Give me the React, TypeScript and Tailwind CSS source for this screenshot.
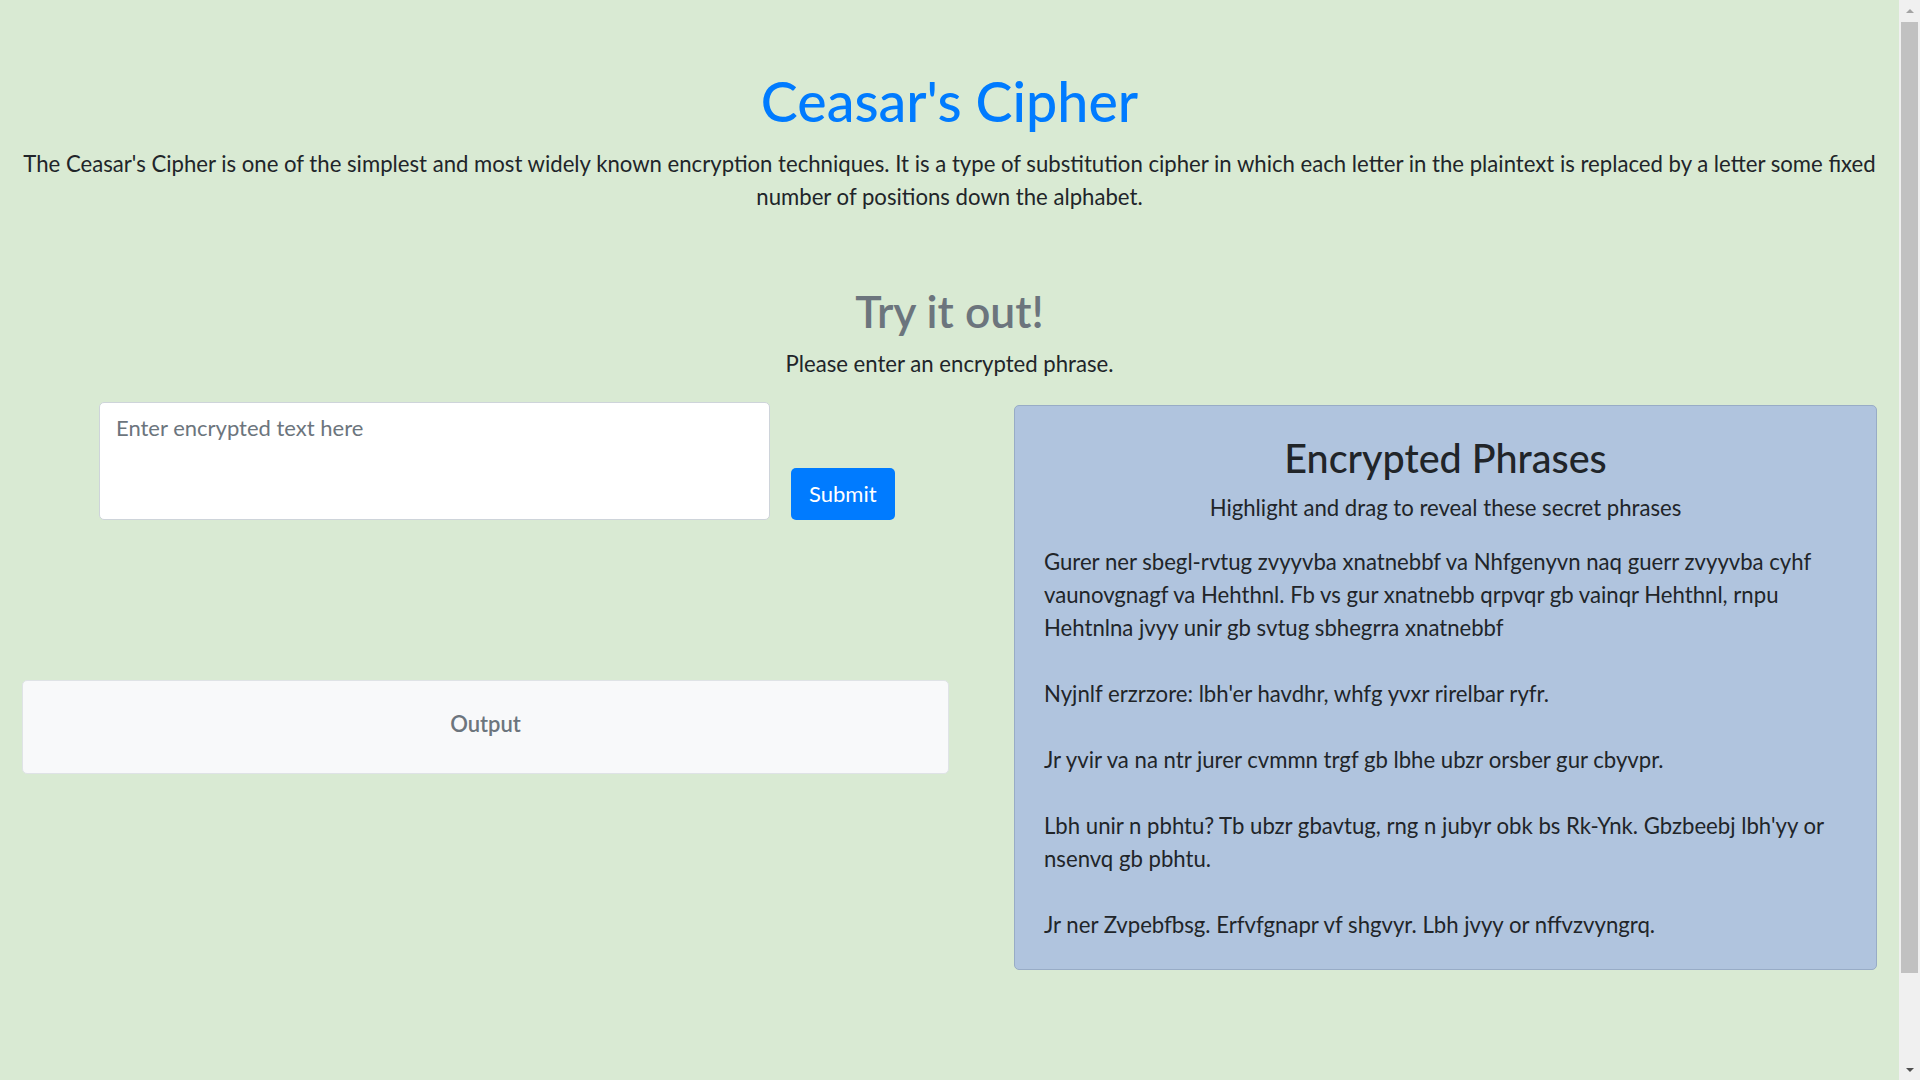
const intro =
  "The Ceasar's Cipher is one of the simplest and most widely known encryption techniques. It is a type of substitution cipher in which each letter in the plaintext is replaced by a letter some fixed number of positions down the alphabet.";

const phrases = [
  "Gurer ner sbegl-rvtug zvyyvba xnatnebbf va Nhfgenyvn naq guerr zvyyvba cyhf vaunovgnagf va Hehthnl. Fb vs gur xnatnebb qrpvqr gb vainqr Hehthnl, rnpu Hehtnlna jvyy unir gb svtug sbhegrra xnatnebbf",
  "Nyjnlf erzrzore: lbh'er havdhr, whfg yvxr rirelbar ryfr.",
  "Jr yvir va na ntr jurer cvmmn trgf gb lbhe ubzr orsber gur cbyvpr.",
  "Lbh unir n pbhtu? Tb ubzr gbavtug, rng n jubyr obk bs Rk-Ynk. Gbzbeebj lbh'yy or nsenvq gb pbhtu.",
  "Jr ner Zvpebfbsg. Erfvfgnapr vf shgvyr. Lbh jvyy or nffvzvyngrq.",
];

// fake browser scrollbar, the page in the reference is a bit taller than the window
function Scrollbar() {
  return (
    <div className="flex h-full w-[21px] shrink-0 flex-col bg-[#f0f0f0]">
      <div className="flex h-[21px] items-center justify-center">
        <span className="h-0 w-0 border-x-[4px] border-b-[4px] border-x-transparent border-b-[#a3a3a3]" />
      </div>
      <div className="mx-[2px] mt-[1px] h-[951px] bg-[#c1c1c1]" />
      <div className="flex-1" />
      <div className="flex h-[21px] items-center justify-center">
        <span className="h-0 w-0 border-x-[4px] border-t-[4px] border-x-transparent border-t-[#505050]" />
      </div>
    </div>
  );
}

export default function App() {
  return (
    <div className="flex h-[1080px] w-full overflow-hidden bg-[#d9ead3] font-['Lato',sans-serif] text-[#212529]">
      <main className="min-w-0 flex-1 px-[22px]">
        <header className="pt-[68px] text-center">
          <h1 className="mb-[12px] text-[55.5px] font-medium leading-[1.2] text-[#007bff]">
            Ceasar's Cipher
          </h1>
          <p className="text-[22.15px] leading-[33px]">{intro}</p>
        </header>

        <section className="mt-[71px] text-center">
          <h2 className="mb-[10px] text-[44.5px] font-semibold leading-[1.2] text-[#6c757d]">
            Try it out!
          </h2>
          <p className="text-[22.15px] leading-[33px]">Please enter an encrypted phrase.</p>
        </section>

        <div className="mt-[22px] flex items-start gap-[65px]">
          <div className="w-[927px] shrink-0">
            <form
              className="ml-[77px] flex items-end gap-[21px]"
              onSubmit={(e) => e.preventDefault()}
            >
              <textarea
                placeholder="Enter encrypted text here"
                className="h-[118px] w-[671px] resize-none rounded-[5px] border border-[#ced4da] bg-white px-[16px] py-[8px] text-[22px] leading-[33px] text-[#495057] placeholder:text-[#6c757d] focus:outline-none"
              />
              <button
                type="submit"
                className="h-[52px] rounded-[5px] bg-[#007bff] px-[18px] text-[22px] leading-[33px] text-white"
              >
                Submit
              </button>
            </form>
            <div className="mt-[160px] flex h-[94px] items-center justify-center rounded-[5px] border border-[#dfe3e6] bg-[#f8f9fa] pb-[6px] text-[22px] font-semibold text-[#6c757d]">
              Output
            </div>
          </div>

          <div className="mt-[3px] w-[863px] shrink-0 rounded-[5px] border border-[#98acc6] bg-[#b0c4de] px-[29px] pb-[28px] pt-[28px]">
            <h2 className="mb-[10px] text-center text-[39.5px] font-medium leading-[1.2]">
              Encrypted Phrases
            </h2>
            <p className="mb-[21px] text-center text-[22.15px] leading-[33px]">
              Highlight and drag to reveal these secret phrases
            </p>
            <p className="text-[22.15px] leading-[33px]">
              {phrases.map((p, i) => (
                <span key={i}>
                  {i > 0 && (
                    <>
                      <br />
                      <br />
                    </>
                  )}
                  {p}
                </span>
              ))}
            </p>
          </div>
        </div>
      </main>
      <Scrollbar />
    </div>
  );
}
